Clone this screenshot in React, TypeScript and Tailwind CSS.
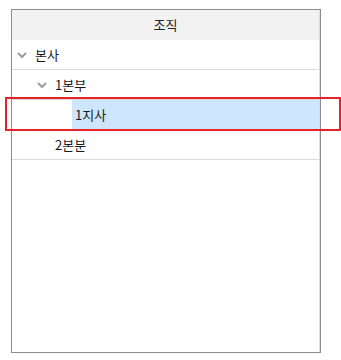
import React from "react";

const Chevron = () => (
  <svg width="10" height="6" viewBox="0 0 10 6" className="shrink-0">
    <path d="M1 1 L5 5 L9 1" fill="none" stroke="#9a9a9a" strokeWidth="2" />
  </svg>
);

type Row = { label: string; level: number; expander: boolean; selected?: boolean };

const rows: Row[] = [
  { label: "본사", level: 0, expander: true },
  { label: "1본부", level: 1, expander: true },
  { label: "1지사", level: 2, expander: false, selected: true },
  { label: "2본분", level: 1, expander: false },
];

export default function App() {
  return (
    <div
      className="relative w-[341px] h-[360px] bg-white"
      style={{ fontFamily: '"Noto Sans CJK KR", "Noto Sans", sans-serif' }}
    >
      <div className="absolute left-[11px] top-[9px] w-[310px] h-[344px] border border-[#8c8c94] bg-white">
        <div className="flex flex-col h-full border-r border-[#dcdcdc]">
          <div className="h-[30px] bg-[#f2f2f2] flex items-center justify-center text-[13px] text-[#222]">
            조직
          </div>
          {rows.map((r, i) => (
            <div key={i} className="h-[30px] border-b border-[#d9d9d9] flex items-stretch">
              <div style={{ width: 20 * r.level }} className="shrink-0" />
              <div className="w-[20px] shrink-0 flex items-center justify-center">
                {r.expander ? <Chevron /> : null}
              </div>
              <div
                className={
                  "flex-1 flex items-center pl-[3px] text-[13px] text-[#1a1a1a] " +
                  (r.selected ? "bg-[#cde6fc]" : "")
                }
              >
                {r.label}
              </div>
            </div>
          ))}
        </div>
      </div>
      <div className="absolute left-[5px] top-[97px] w-[336px] h-[34px] border-2 border-[#e8212b]" />
    </div>
  );
}
